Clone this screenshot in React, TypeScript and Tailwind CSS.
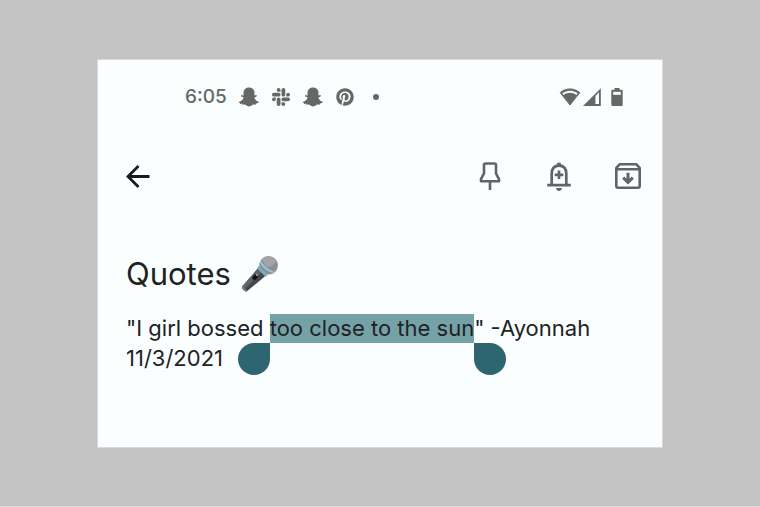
import React from "react";
import { FaPinterest, FaSnapchatGhost } from "react-icons/fa";
import { SiSlack } from "react-icons/si";

function StatusBar() {
  return (
    <div className="flex h-5 items-center justify-between pr-[39px] pl-[87px] text-[#666866]">
      <div className="flex items-center gap-3">
        <time className="w-[42px] text-[19px] leading-5 font-medium whitespace-nowrap">6:05</time>
        <FaSnapchatGhost className="size-5" aria-label="Snapchat" />
        <SiSlack className="size-5 p-px" aria-label="Slack" />
        <FaSnapchatGhost className="size-5" aria-label="Snapchat" />
        <FaPinterest className="size-5 p-px" aria-label="Pinterest" />
        <span className="ml-1.5 size-1.5 rounded-full bg-current" />
      </div>
      <div className="flex items-center">
        <svg className="h-5 w-[22px]" viewBox="0 0 22 20" fill="none" aria-label="Wi-Fi">
          <path d="M1.2 5.6C7 .7 15 .7 20.8 5.6L11 18Z" fill="currentColor" stroke="currentColor" strokeLinejoin="round" />
          <path d="M3.3 6.3C8 2.9 14 2.9 18.7 6.3L17.4 7.9C13.5 5 8.5 5 4.6 7.9Z" fill="#fafeff" />
        </svg>
        <svg className="ml-0.5 h-5 w-[18px]" viewBox="0 0 18 20" fill="none" aria-label="Mobile signal">
          <path d="M0 19 17.8 1.2V19Z" fill="currentColor" />
          <path d="M12.4 9 16 5.2V17H12.4Z" fill="#fafeff" />
        </svg>
        <svg className="ml-[10px] h-5 w-3" viewBox="0 0 12 20" aria-label="Battery">
          <path d="M3.5 1h5v1.8h2q1.2 0 1.2 1.2v13.8q0 1.2-1.2 1.2h-9Q.3 19 .3 17.8V4q0-1.2 1.2-1.2h2Z" fill="currentColor" />
          <path d="M2.2 4.8h7.6v3H2.2Z" fill="#fafeff" />
        </svg>
      </div>
    </div>
  );
}

function Toolbar() {
  return (
    <header className="mt-[53px] flex h-8 items-center justify-between pr-[21px] pl-7 text-[#626365]">
      <button type="button" aria-label="Back" className="text-[#191b1d]">
        <svg className="h-8 w-6" viewBox="0 0 24 32" fill="none" stroke="currentColor" strokeWidth="2.8">
          <path d="M23.5 16.5H2M12.5 6 2 16.5 12.5 27" />
        </svg>
      </button>
      <div className="flex gap-[43px]">
        <button type="button" aria-label="Pin note">
          <svg className="h-8 w-[25px]" viewBox="0 0 25 32" fill="none" stroke="currentColor" strokeWidth="2.6">
            <path d="M7.5 3.5h9q1.5 0 1.5 1.5v8.4l3 5.8v2H3v-2l3-5.8V5Q6 3.5 7.5 3.5Z" strokeLinejoin="round" />
            <path d="M12 21v9" />
          </svg>
        </button>
        <button type="button" aria-label="Add reminder">
          <svg className="h-8 w-[26px]" viewBox="0 0 26 32" fill="none" stroke="currentColor" strokeWidth="2.7">
            <path d="M5.7 25V14q0-8.3 7.3-8.3t7.3 8.3v11M1.2 25.1h23.6M13 10.5v8.6M8.7 14.8h8.6" />
            <path d="M10.8 6V4.8a2.2 2.2 0 0 1 4.4 0V6ZM10 28h6q-.5 3-3 3t-3-3Z" fill="currentColor" stroke="none" />
          </svg>
        </button>
        <button type="button" aria-label="Archive">
          <svg className="h-8 w-[26px]" viewBox="0 0 26 32" fill="none" stroke="currentColor" strokeWidth="2.6">
            <path d="M1.3 7.8 4.6 4.3h16.8l3.3 3.5v18q0 1.9-1.9 1.9H3.2q-1.9 0-1.9-1.9ZM2 9.3h22" strokeLinejoin="round" />
            <path d="M13 12.8v9M8.2 17.7l4.8 4.6 4.8-4.6" strokeWidth="3" />
          </svg>
        </button>
      </div>
    </header>
  );
}

function Microphone() {
  return (
    <svg className="h-9 w-[38px]" viewBox="0 0 38 36" aria-label="Microphone">
      <path d="M17.5 11.5 25 19.5 6.3 35.1Q4.7 36 3.2 34.5L1.8 33Q.5 31.6 1.6 30Z" fill="#454749" />
      <path d="M18 12 21.2 15.2 3 33.5 1.8 33Q.5 31.6 1.6 30Z" fill="#626466" />
      <path d="M1.6 30 6.3 35.1Q4.7 36 3.2 34.5L1.8 33Q.5 31.6 1.6 30Z" fill="#77797b" />
      <circle cx="27.6" cy="9.3" r="9.3" fill="#8d8f91" />
      <path d="M21 3a9.3 9.3 0 0 1 14.5 2q-4 6-10 6Z" fill="#a2a4a5" />
      <path d="M17.8 10.1 27 19.3 24.2 20.6 16.2 12.6Z" fill="#79aebf" />
      <path d="M20 3.7Q22 11.5 33.9 16.1L32.2 17.5Q20.4 13.2 18.9 5.8Z" fill="#91c9dc" />
      <ellipse cx="14" cy="21.2" rx="3" ry="2.2" transform="rotate(-45 14 21.2)" fill="#111315" />
      <circle cx="16" cy="19" r="1" fill="#a8aaab" />
    </svg>
  );
}

function SelectedText({ children }: { children: React.ReactNode }) {
  return (
    <mark className="relative inline-block h-[29px] bg-[#75a2a7] leading-7 text-inherit">
      {children}
      <span className="absolute top-full right-full size-8 rounded-full rounded-tr-none bg-[#2d6670]" />
      <span className="absolute top-full left-full size-8 rounded-full rounded-tl-none bg-[#2d6670]" />
    </mark>
  );
}

export default function App() {
  return (
    <div className="flex min-h-screen flex-col border-b border-[#dcdcdc] bg-[#c3c3c3] px-[97px] pt-[59px] pb-[58px] font-[Inter,'Liberation_Sans',sans-serif]">
      <main className="flex-1 border border-[#d9dbdb] bg-[#fafeff] pt-[27px]">
        <StatusBar />
        <Toolbar />
        <article className="mt-16 px-7 text-[#202224]">
          <h1 className="flex h-9 items-center gap-2.5 text-[31px] leading-9">
            Quotes
            <Microphone />
          </h1>
          <p className="mt-[21px] text-[22px] leading-[30px]">
            "I girl bossed <SelectedText>too close to the sun</SelectedText>" -Ayonnah
            <br />
            11/3/2021
          </p>
        </article>
      </main>
    </div>
  );
}
